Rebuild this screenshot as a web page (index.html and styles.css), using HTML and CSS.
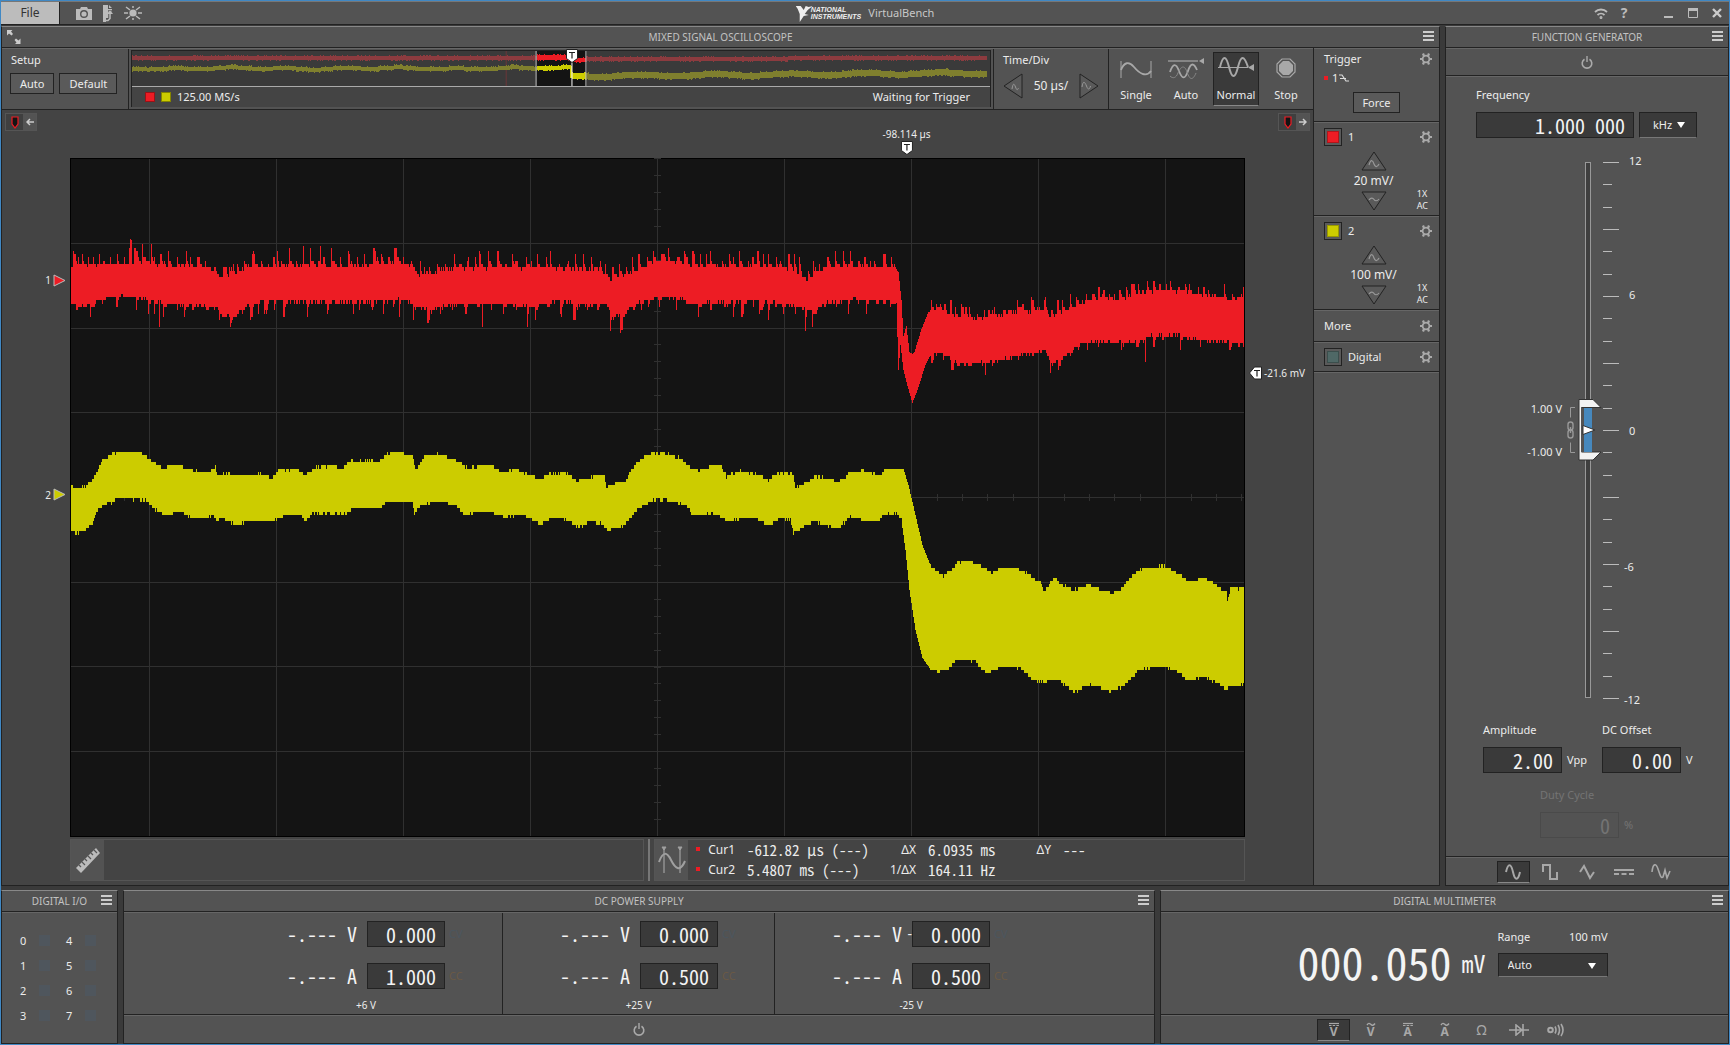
FILE: index.html
```html
<!DOCTYPE html>
<html lang="en">
<head>
<meta charset="utf-8">
<title>VirtualBench</title>
<link rel="stylesheet" href="styles.css">
</head>
<body>
<svg class="defs" aria-hidden="true">
  <symbol id="menu" viewBox="0 0 11 10"><path d="M0 0h11v2H0zM0 4h11v2H0zM0 8h11v2H0z" fill="currentColor"/></symbol>
  <symbol id="gear" viewBox="0 0 12 12"><circle cx="6" cy="6" r="3.400" fill="none" stroke="currentColor" stroke-width="1.800"/><path d="M3 .5l1 2.500M9 .5l-1 2.500M3 11.500l1-2.500M9 11.500l-1-2.500M0 6h2.600M9.400 6H12" stroke="currentColor" stroke-width="2.200"/></symbol>
  <symbol id="power" viewBox="0 0 12 13"><path d="M3.500 3.200a4.800 4.800 0 1 0 5 0" fill="none" stroke="currentColor" stroke-width="1.600"/><path d="M6 0v6" stroke="currentColor" stroke-width="1.400"/></symbol>
  <symbol id="up" viewBox="0 0 26 20"><path d="M13 1L25 19H1Z" fill="#5a5a5a" stroke="#222" /><path d="M8 14c2-7 4-4 5-1s3 4 5 0" fill="none" stroke="#999" stroke-width="1.200"/></symbol>
  <symbol id="down" viewBox="0 0 26 20"><path d="M13 19L25 1H1Z" fill="#5a5a5a" stroke="#222"/><path d="M8 9c2-3 4-2 5-.5s3 2 5-.5" fill="none" stroke="#999" stroke-width="1.200"/></symbol>
  <symbol id="flag" viewBox="0 0 8 13"><path d="M1 1h6v7L4 12 1 8Z" fill="#141414" stroke="#ed1c24" stroke-width="1.200"/></symbol>
</svg>

<div class="window">
  <header class="titlebar">
    <button class="file">File</button>
    <button class="icon" aria-label="Screenshot"><svg width="16" height="13" viewBox="0 0 16 13"><path d="M0 2h4l1-2h6l1 2h4v11H0z" fill="#bbb"/><circle cx="8" cy="7" r="3.300" fill="none" stroke="#535353" stroke-width="1.400"/></svg></button>
    <button class="icon" aria-label="Export"><svg width="10" height="17" viewBox="0 0 10 17"><path d="M0 0h5v4h4v3l-3 2v4H3v4H0zM6 0l3 3H6z" fill="#bbb"/><path d="M7 5v8c0 2-3 2-3 2" fill="none" stroke="#535353" stroke-width="3.400"/><path d="M2 15.500h3l2-2V8" fill="none" stroke="#bbb" stroke-width="1.500"/><path d="M4 9l3-4 3 4z" fill="#bbb"/></svg></button>
    <button class="icon" aria-label="Brightness"><svg width="18" height="14" viewBox="0 0 18 14"><circle cx="9" cy="7" r="3.600" fill="#bbb"/><path d="M9 0v2M9 12v2M0 7h4M14 7h4M2 1l4 3M16 1l-4 3M2 13l4-3M16 13l-4-3" stroke="#bbb" stroke-width="1.500"/></svg></button>
    <div class="brand">
      <svg width="17" height="17" viewBox="0 0 17 17"><path d="M0 1h5l3 4 2-4 3 1 4-1-5 4-3 4 4 1-5 1-4 6V9L2 4Z" fill="#eee"/></svg>
      <span class="ni">NATIONAL<br>INSTRUMENTS</span><span class="vb">VirtualBench</span>
    </div>
    <div class="sys">
      <svg width="14" height="11" viewBox="0 0 14 11" fill="none" stroke="#bbb" stroke-width="1.800"><path d="M1 4a8.500 8.500 0 0 1 12 0M3.500 7a5 5 0 0 1 7 0"/><circle cx="7" cy="9.500" r=".6"/></svg>
      <button class="help" aria-label="Help">?</button>
      <button class="icon" aria-label="Minimize"><svg width="10" height="10"><path d="M0 9h9" stroke="#bbb" stroke-width="2"/></svg></button>
      <button class="icon" aria-label="Maximize"><svg width="10" height="10"><path d="M.5.500h9v9h-9z" fill="none" stroke="#bbb" stroke-width="1"/><path d="M0 0h10v3H0z" fill="#bbb"/></svg></button>
      <button class="icon" aria-label="Close"><svg width="10" height="10"><path d="M1 1l8 8M9 1L1 9" stroke="#ccc" stroke-width="2.400"/></svg></button>
    </div>
  </header>

  <main class="upper">
    <section class="panel scope">
      <div class="head"><svg class="expand" width="14" height="14" viewBox="0 0 14 14"><path d="M0 0h5.500L4 1.500 6 4 4.500 5.500 2 3.500 0 5.500zM13.500 14H8l1.500-1.500L7.500 10 9 8.500 11.500 10.500l2-2z" fill="#ccc"/></svg><h2>MIXED SIGNAL OSCILLOSCOPE</h2><button class="menu" aria-label="Oscilloscope menu"><svg><use href="#menu"/></svg></button></div>
      <div class="scope-body">
        <div class="scope-main">
          <div class="tools">
            <div class="setup"><span>Setup</span><div><button class="btn">Auto</button><button class="btn">Default</button></div></div>
            <div class="overview">
              <svg id="overview" viewBox="0 0 861 35" preserveAspectRatio="none"></svg>
              <svg class="tag ov-tag" width="12" height="14" viewBox="0 0 12 14"><path d="M.5.500h11v9L6 13.500.500 9.500Z" fill="#fff" stroke="#222"/><path d="M3 3.500h6M6 3.500v6" stroke="#222" stroke-width="1.200"/></svg>
              <div class="ov-row"><i class="sq red"></i><i class="sq yel"></i><span>125.00 MS/s</span><span class="wait">Waiting for Trigger</span></div>
            </div>
            <div class="timediv"><span>Time/Div</span><div>
              <button class="icon" aria-label="Decrease time per division"><svg width="20" height="26"><path d="M1 13L19 1v24Z" fill="#5a5a5a" stroke="#222"/><path d="M9 16c1-6 2-6 3.500-2s2 3 3 1" fill="none" stroke="#999"/></svg></button>
              <span class="val">50 µs/</span>
              <button class="icon" aria-label="Increase time per division"><svg width="20" height="26"><path d="M19 13L1 1v24Z" fill="#5a5a5a" stroke="#222"/><path d="M3 14c1-7 3-5 4.500-1s3 4 4 0" fill="none" stroke="#999"/></svg></button></div></div>
            <div class="modes">
              <button><svg width="32" height="26" viewBox="0 0 32 26" fill="none" stroke="#a8a8a8"><path d="M1 5v17M31 5v17"/><path d="M1 14C4 6 9 5 14 11s12 11 17 4" stroke-width="1.800"/></svg>Single</button>
              <button><svg width="38" height="26" viewBox="0 0 38 26" fill="none" stroke="#a8a8a8"><path d="M1 5h30" stroke-width="1.200"/><path d="M37 2v6l-5-3z" fill="#a8a8a8" stroke="none"/><path d="M3 16c3-9 6-9 9-1s6 9 9 0 6-8 9-1" stroke-width="1.800"/><path d="M3 20c3 3 6 2 8-3s6-10 9-1 6 8 9 1" stroke="#888"/></svg>Auto</button>
              <button class="on"><svg width="36" height="26" viewBox="0 0 36 26" fill="none" stroke="#a8a8a8"><path d="M0 11.500h30"/><path d="M36 8v7l-6-3.500z" fill="#a8a8a8" stroke="none"/><path d="M2 11C5-1 8-1 11 11s6 12 9 0 6-12 10 0" stroke-width="2"/></svg>Normal</button>
              <button><svg width="22" height="26" viewBox="0 0 22 26"><path d="M7 3h8l5 5v8l-5 5H7l-5-5V8z" fill="none" stroke="#a8a8a8" stroke-width="1.200"/><path d="M8 5h6l4 4v6l-4 4H8l-4-4V9z" fill="#a8a8a8"/></svg>Stop</button>
            </div>
          </div>
          <div class="canvas">
            <div class="pill left"><b><svg width="8" height="13"><use href="#flag"/></svg></b><svg width="8" height="8" viewBox="0 0 8 8"><path d="M8 4H1M4 1L1 4l3 3" fill="none" stroke="#ccc" stroke-width="1.500"/></svg></div>
            <div class="trigpos"><span>-98.114 µs</span><svg width="12" height="14" viewBox="0 0 12 14"><path d="M.5.500h11v9L6 13.500.500 9.500Z" fill="#fff" stroke="#222"/><path d="M3 3.500h6M6 3.500v6" stroke="#222" stroke-width="1.200"/></svg></div>
            <div class="pill right"><b><svg width="8" height="13"><use href="#flag"/></svg></b><svg width="8" height="8" viewBox="0 0 8 8"><path d="M0 4h7M4 1l3 3-3 3" fill="none" stroke="#ccc" stroke-width="1.500"/></svg></div>
            <div class="gutter">
              <div class="ch ch1"><span>1</span><svg width="13" height="13"><path d="M1 1v11l11-5.500z" fill="#ed1c24" stroke="#bbb"/></svg></div>
              <div class="ch ch2"><span>2</span><svg width="13" height="13"><path d="M1 1v11l11-5.500z" fill="#cc0" stroke="#bbb"/></svg></div>
            </div>
            <svg id="plot" viewBox="70 158 1175 679" preserveAspectRatio="none"></svg>
            <div class="gutter"><div class="level"><svg width="13" height="14" viewBox="0 0 13 14"><path d="M12.500 1v12h-7L.5 7l5-6z" fill="#fff" stroke="#222"/><path d="M5 4.500h6M8 4.500v6" stroke="#222" stroke-width="1.200"/></svg><span>-21.6 mV</span></div></div>
            <div class="readouts">
              <div class="measure"><button aria-label="Measurements"><svg width="26" height="28" viewBox="0 0 26 28"><path d="M1 22L21 2l4 5L6 27z" fill="#bbb"/><path d="M4 19l2 2M7 16l3 3M10 13l2 2M13 10l3 3M16 7l2 2M19 4l3 3" stroke="#555" stroke-width="1.200"/></svg></button></div>
              <div class="split"></div>
              <div class="cursors"><button aria-label="Cursors"><svg width="28" height="28" viewBox="0 0 28 28" fill="none" stroke="#a0a0a0"><path d="M6 2v25M22 2v25" stroke-width="1.200"/><path d="M4 1h4L6 4zM20 1h4l-2 3z" fill="#a0a0a0"/><path d="M1 16C5 5 9 6 13 14s9 13 14 1" stroke-width="2"/></svg></button>
                <div class="cur">
                  <i class="dot"></i><span class="k">Cur1</span><output>-612.82 µs (---)</output><span class="k">ΔX</span><output>6.0935 ms</output><span class="k">ΔY</span><output>---</output>
                  <i class="dot"></i><span class="k">Cur2</span><output>5.4807 ms (---)</output><span class="k">1/ΔX</span><output>164.11 Hz</output>
                </div></div>
            </div>
          </div>
        </div>
        <aside class="side">
          <div class="row trig"><div class="line"><span>Trigger</span><button class="icon" aria-label="Trigger settings"><svg width="12" height="12"><use href="#gear"/></svg></button></div><div class="src"><i class="dot"></i><span>1</span><svg width="10" height="8" viewBox="0 0 10 8"><path d="M0 1h3l4 6h3M1 4.500h6" fill="none" stroke="#ddd" stroke-width="1.200"/></svg></div><button class="btn force">Force</button></div>
          <div class="row chan"><div class="line"><button class="swatch" aria-label="Channel 1"><i class="red"></i></button><span class="name">1</span><button class="icon" aria-label="Channel 1 settings"><svg width="12" height="12"><use href="#gear"/></svg></button></div>
            <div class="scale"><button class="icon" aria-label="Increase volts"><svg width="26" height="20"><use href="#up"/></svg></button><span>20 mV/</span><button class="icon" aria-label="Decrease volts"><svg width="26" height="20"><use href="#down"/></svg></button></div><div class="coup">1X<br>AC</div></div>
          <div class="row chan"><div class="line"><button class="swatch" aria-label="Channel 2"><i class="yel"></i></button><span class="name">2</span><button class="icon" aria-label="Channel 2 settings"><svg width="12" height="12"><use href="#gear"/></svg></button></div>
            <div class="scale"><button class="icon" aria-label="Increase volts"><svg width="26" height="20"><use href="#up"/></svg></button><span>100 mV/</span><button class="icon" aria-label="Decrease volts"><svg width="26" height="20"><use href="#down"/></svg></button></div><div class="coup">1X<br>AC</div></div>
          <div class="row more"><div class="line"><span>More</span><button class="icon" aria-label="More settings"><svg width="12" height="12"><use href="#gear"/></svg></button></div></div>
          <div class="row digital"><div class="line"><button class="swatch" aria-label="Digital"><i class="teal"></i></button><span class="name">Digital</span><button class="icon" aria-label="Digital settings"><svg width="12" height="12"><use href="#gear"/></svg></button></div></div>
          <div class="row rest"></div>
        </aside>
      </div>
    </section>

    <section class="panel fgen">
      <div class="head"><h2>FUNCTION GENERATOR</h2><button class="menu" aria-label="Function generator menu"><svg><use href="#menu"/></svg></button></div>
      <div class="pwr"><button class="icon" aria-label="Function generator power"><svg width="12" height="13"><use href="#power"/></svg></button></div>
      <div class="fg-body">
        <div class="freq"><label for="freq">Frequency</label><div><input id="freq" value="1.000 000"><span class="select"><select aria-label="Frequency unit"><option>kHz</option></select></span></div></div>
        <div class="slider">
          <svg id="scale" width="200" height="560" viewBox="1510 150 200 560"></svg>
          <span class="lab l12">12</span><span class="lab l6">6</span><span class="lab l0">0</span><span class="lab m6">-6</span><span class="lab m12">-12</span>
          <span class="hi">1.00 V</span><span class="lo">-1.00 V</span>
          <input type="range" min="-12" max="12" value="0" aria-label="DC offset level">
        </div>
        <div class="pair">
          <div class="field"><label for="amp">Amplitude</label><div><input id="amp" value="2.00"><span>Vpp</span></div></div>
          <div class="field"><label for="off">DC Offset</label><div><input id="off" value="0.00"><span>V</span></div></div>
        </div>
        <div class="field duty"><label for="duty">Duty Cycle</label><div><input id="duty" value="0" disabled><span>%</span></div></div>
      </div>
      <div class="strip">
        <button class="on" aria-label="Sine"><svg width="16" height="16" viewBox="0 0 16 16"><path d="M1 8C3-1 6-1 8 8s5 9 7 0"/></svg></button>
        <button aria-label="Square"><svg width="16" height="16" viewBox="0 0 16 16"><path d="M1 8V1h7v14h7V8"/></svg></button>
        <button aria-label="Triangle"><svg width="16" height="16" viewBox="0 0 16 16"><path d="M1 8l4-6 6 12 4-6"/></svg></button>
        <button aria-label="DC"><svg width="20" height="16" viewBox="0 0 20 16"><path d="M0 6h20"/><path d="M0 10h20" stroke-dasharray="5 2.500"/></svg></button>
        <button aria-label="Arbitrary"><svg width="20" height="16" viewBox="0 0 20 16"><path d="M1 8C2-1 5-1 7 5s3 10 5 8l2-7 2 8 3-7" stroke-width="1.600"/></svg></button>
      </div>
    </section>
  </main>

  <div class="lower">
    <section class="panel dio">
      <div class="head"><h2>DIGITAL I/O</h2><button class="menu" aria-label="Digital I/O menu"><svg><use href="#menu"/></svg></button></div>
      <div class="bits">
        <label>0<input type="checkbox"></label><label>4<input type="checkbox"></label>
        <label>1<input type="checkbox"></label><label>5<input type="checkbox"></label>
        <label>2<input type="checkbox"></label><label>6<input type="checkbox"></label>
        <label>3<input type="checkbox"></label><label>7<input type="checkbox"></label>
      </div>
    </section>
    <section class="panel psu">
      <div class="head"><h2>DC POWER SUPPLY</h2><button class="menu" aria-label="Power supply menu"><svg><use href="#menu"/></svg></button></div>
      <div class="rails">
        <div class="rail first"><div class="inner"><div class="set"><output>-.---</output><span class="unit">V</span><span class="neg"></span><input aria-label="+6 V voltage" value="0.000"><span class="cv">CV</span></div><div class="set"><output>-.---</output><span class="unit">A</span><span class="neg"></span><input aria-label="+6 V current" value="1.000"><span class="cc">CC</span></div><p>+6 V</p></div></div>
        <div class="rail"><div class="inner"><div class="set"><output>-.---</output><span class="unit">V</span><span class="neg"></span><input aria-label="+25 V voltage" value="0.000"><span class="cv">CV</span></div><div class="set"><output>-.---</output><span class="unit">A</span><span class="neg"></span><input aria-label="+25 V current" value="0.500"><span class="cc">CC</span></div><p>+25 V</p></div></div>
        <div class="rail"><div class="inner"><div class="set"><output>-.---</output><span class="unit">V</span><span class="neg">-</span><input aria-label="-25 V voltage" value="0.000"><span class="cv">CV</span></div><div class="set"><output>-.---</output><span class="unit">A</span><span class="neg"></span><input aria-label="-25 V current" value="0.500"><span class="cc">CC</span></div><p>-25 V</p></div></div>
      </div>
      <div class="strip"><button class="icon" aria-label="Power supply power"><svg width="12" height="13"><use href="#power"/></svg></button></div>
    </section>
    <section class="panel dmm">
      <div class="head"><h2>DIGITAL MULTIMETER</h2><button class="menu" aria-label="Multimeter menu"><svg><use href="#menu"/></svg></button></div>
      <div class="meter">
        <output>000.050</output><span class="mv">mV</span>
        <div class="range"><div><label for="range">Range</label><span>100 mV</span></div><span class="select"><select id="range"><option>Auto</option></select></span></div>
      </div>
      <div class="strip">
        <button class="on" aria-label="DC volts"><svg width="12" height="16" viewBox="0 0 12 16"><path d="M1 1.500h10" stroke-width="1.200"/><path d="M1 3.500h10" stroke-width="1" stroke-dasharray="2.500 1.200"/></svg><b>V</b></button>
        <button aria-label="AC volts"><svg width="12" height="16" viewBox="0 0 12 16"><path d="M2 3c2-3 3-1 4-.5s2 2 4-1" stroke-width="1.400"/></svg><b>V</b></button>
        <button aria-label="DC amps"><svg width="12" height="16" viewBox="0 0 12 16"><path d="M1 1.500h10" stroke-width="1.200"/><path d="M1 3.500h10" stroke-width="1" stroke-dasharray="2.500 1.200"/></svg><b>A</b></button>
        <button aria-label="AC amps"><svg width="12" height="16" viewBox="0 0 12 16"><path d="M2 3c2-3 3-1 4-.5s2 2 4-1" stroke-width="1.400"/></svg><b>A</b></button>
        <button aria-label="Resistance" class="ohm">Ω</button>
        <button aria-label="Diode"><svg width="20" height="12" viewBox="0 0 20 12"><path d="M0 6h20M7 1v10l6-5zM14 0v12" stroke-width="1.600"/></svg></button>
        <button aria-label="Continuity"><svg width="18" height="14" viewBox="0 0 18 14"><circle cx="3.500" cy="7" r="2.300"/><path d="M8 3.500q2 3.500 0 7M11 2q3 5 0 10M14 1q4 6 0 12" stroke-width="1.600"/></svg></button>
      </div>
    </section>
  </div>
</div>
<script src="waves.js"></script>
</body>
</html>
```
FILE: styles.css
```css
*{box-sizing:border-box}
body{margin:0;background:#3a3a3a;color:#ececec;font:11px/14px "Noto Sans","Open Sans",sans-serif}
button,input,select{font:inherit;color:inherit;margin:0;padding:0;border:0;border-radius:0;background:none}
svg{display:block;flex:none}
i{display:block;flex:none}
p,h2{margin:0}
.defs{position:absolute;width:0;height:0}
.window{height:100vh;min-height:900px;display:flex;flex-direction:column;border:1px solid #4088c4}
.icon{display:flex;color:#aaa}

.titlebar{position:relative;flex:none;height:24px;display:flex;align-items:center;gap:11px;background:#535353;border-top:1px solid #777;border-bottom:1px solid #222;padding-right:7px}
.file{align-self:stretch;width:59px;background:#bcbcbc;color:#333;border-right:1px solid #222;margin-right:5px;font-size:12px}
.brand{position:absolute;left:50%;transform:translateX(-50%);display:flex;align-items:center}
.ni{font:italic bold 7px/7px "Liberation Sans",Arial,sans-serif;color:#eee;margin-left:-2px;margin-right:7px}
.vb{color:#c8c8c8}
.sys{margin-left:auto;display:flex;align-items:center;gap:14px}
.help{font:bold 14px/14px "Noto Sans",sans-serif;color:#bbb;margin-left:-2px;margin-right:22px;width:8px}

.upper{flex:1;min-height:0;display:flex;gap:5px;padding-top:1px}
.lower{flex:none;height:158px;display:flex;gap:5px;padding-top:4px}
.panel{display:flex;flex-direction:column;background:#535353;border:1px solid #222;border-top:1px solid #888}
.head{flex:none;height:21px;display:flex;align-items:center;justify-content:center;position:relative;border-bottom:1px solid #222}
.head h2{font-size:10px;line-height:14px;font-weight:400;color:#c2c2c2}
.menu{position:absolute;right:5px;top:4px;color:#ccc}
.menu svg{width:11px;height:10px}
.expand{position:absolute;left:5px;top:3px}
.scope{flex:1;min-width:0}
.scope-body{flex:1;min-height:0;display:flex}
.scope-main{flex:1;min-width:0;display:flex;flex-direction:column}
.tools{flex:none;height:62px;display:flex;border-bottom:1px solid #222;border-top:1px solid #666}
.setup{width:127px;padding:4px 8px;border-right:1px solid #222}
.setup>span{padding-left:1px}
.setup div{display:flex;gap:5px;margin-top:6px}
.btn{height:21px;border:1px solid #222;background:#5a5a5a;padding:0 9px}
.overview{flex:1;min-width:0;margin:1px 2px 2px;border:1px solid #222;position:relative;background:#3a3a3a}
#overview{width:100%;height:35px}
.ov-tag{position:absolute;left:51.300%;top:-2px;margin-left:-6px}
.ov-row{height:21px;border-top:1px solid #aaa;background:#444;display:flex;align-items:center;gap:6px;padding:0 20px 0 13px}
.wait{margin-left:auto}
.sq{width:10px;height:10px;border:1px solid rgba(0,0,0,.35)}
.red{background:#ed1c24}.yel{background:#cc0}.teal{background:#4f6866}
.timediv{width:115px;padding:4px 9px;border-left:1px solid #222}
.timediv div{display:flex;align-items:center;justify-content:space-between;margin-top:6px}
.timediv .val,.scale span{font-size:12px}
.modes{width:205px;border-left:1px solid #222;display:flex;gap:4px;padding:3px 3px 3px 4px}
.modes button{width:46px;display:flex;flex-direction:column;align-items:center;justify-content:space-between;padding:3px 0;border:1px solid transparent}
.modes .on,.strip .on{background:#3a3a3a;border:1px solid #222;border-bottom-color:#888}
.canvas{flex:1;min-height:0;background:#444;display:grid;grid-template:48px 1fr 48px/68px 1fr 68px;position:relative}
#plot{width:100%;height:100%;grid-row:2;grid-column:2}
.gutter{grid-row:2;position:relative}
.gutter:nth-of-type(5){grid-column:3}
.ch,.level{position:absolute;display:flex;align-items:center;transform:translateY(-50%)}
.ch{right:4px;gap:2px;font-size:10px}
.ch1{top:18%}.ch2{top:49.600%}
.level{left:4px;top:31.600%;gap:2px;font-size:10px;white-space:nowrap}
.trigpos{position:absolute;left:69%;top:17px;transform:translateX(-50%);display:flex;flex-direction:column;align-items:center;font-size:10px;line-height:14px}
.pill{position:absolute;top:3px;height:18px;display:flex;align-items:center;background:#535353;border:1px solid #555;padding-right:2px;gap:3px}
.pill b{height:100%;width:17px;background:#3f3f3f;display:grid;place-items:center}
.pill.left{left:3px}.pill.right{right:3px}
.readouts{grid-row:3;grid-column:2;display:flex;gap:4px;padding:2px 0;height:46px;font-size:12px}
.measure{flex:572;border:1px solid #555}
.split{width:2px;background:#777}
.cursors{flex:589;border:1px solid #555;display:flex;min-width:0}
.measure button,.cursors button{width:33px;height:100%;background:#535353;display:grid;place-items:center}
.cur{display:grid;grid-template-columns:5px 34px 143px 38px 109px 26px auto;justify-content:start;align-content:center;padding-left:8px}
.cur .k{text-align:right;line-height:20px}
.cur output{padding-left:12px;line-height:20px;white-space:nowrap}
output,input,.unit{font-family:"Noto Sans Mono CJK SC","DejaVu Sans Mono",monospace}
.cur output{font-size:15px}
.dot{width:4px;height:4px;background:#ed1c24}
.cur .dot{margin-top:7px}
.side{flex:none;width:126px;border-left:1px solid #222}
.row{border-top:1px solid #666;border-bottom:1px solid #222;padding:0 10px;position:relative}
.line{display:flex;align-items:center}
.line .icon{margin-left:auto;margin-right:-3px}
.trig{height:74px;padding-top:3px;display:flex;flex-direction:column}
.src{display:flex;align-items:center;gap:4px;margin-top:5px}
.src svg{margin-left:-3px}
.force{align-self:center;margin-top:7px;padding:0 8px}
.chan{height:94px;padding-top:5px}
.swatch{width:18px;height:18px;border:1px solid #222;display:grid;place-items:center;background:#5a5a5a}
.swatch i{width:12px;height:12px;border:1px solid rgba(0,0,0,.25)}
.name{margin-left:6px}
.scale{display:flex;flex-direction:column;align-items:center;margin:5px 6px 0 0}
.scale span{line-height:20px}
.coup{position:absolute;right:11px;top:65px;font-size:9px;line-height:12px}
.more{height:32px;padding-top:8px}
.digital{height:30px;padding-top:5px}
.rest{border-bottom:0}

.fgen{flex:none;width:284px}
.pwr{flex:none;height:28px;display:grid;place-items:center;border-top:1px solid #666;border-bottom:1px solid #222}
.fg-body{flex:1;min-height:0;border-top:1px solid #666;display:flex;flex-direction:column}
.freq{padding:11px 0 0 30px}
.freq>div{display:flex;gap:5px;margin-top:10px}
input{height:26px;border:1px solid #222;background:#3a3a3a;font-size:20px;text-align:right;padding-right:8px;width:79px;color:#f4f4f4}
#freq{width:158px}
.select{position:relative;display:block}
.select select{appearance:none;width:58px;height:26px;background:#3a3a3a;border:1px solid #222;border-bottom-color:#777;padding-left:13px}
.select::after{content:"";position:absolute;right:12px;top:10px;border:4px solid transparent;border-top:6px solid #fff;border-bottom:0;pointer-events:none}
.slider{position:relative;width:200px;height:560px;margin:12px 0 0 64px}
.slider input{position:absolute;left:60px;top:12px;width:30px;height:536px;margin:0;opacity:0;writing-mode:vertical-lr}
.slider span{position:absolute;line-height:14px}
.lab.l12{left:119px;top:4px}.lab.l6{left:119px;top:138px}.lab.l0{left:119px;top:274px}.lab.m6{left:114px;top:410px}.lab.m12{left:114px;top:543px}
.slider .hi,.slider .lo{right:148px;font-size:11px}.hi{top:252px}.lo{top:295px}
.pair{display:flex;padding-left:37px;gap:5px;margin-top:13px}
.field>div{display:flex;align-items:center;gap:5px;margin-top:10px}
.field>label{display:block}
.pair .field{width:114px}
.duty{padding-left:94px;margin-top:15px;color:#747474}
.duty input{background:none;border-color:#4a4a4a;color:#747474}
.strip{flex:none;height:28px;border-top:1px solid #666;box-shadow:0 -1px #222;display:flex;justify-content:center;align-items:center;gap:4px;color:#a8a8a8}
.strip button{width:33px;height:22px;display:grid;place-items:center;border:1px solid transparent}
.strip svg{fill:none;stroke:#a8a8a8;stroke-width:2}

.dio{width:117px}
.bits{flex:1;border-top:1px solid #666;display:grid;grid-template-columns:46px 46px;grid-auto-rows:25px;align-content:start;padding:15px 0 0 18px}
.bits label{display:flex;align-items:center;gap:13px}
.bits input{appearance:none;width:11px;height:11px;padding:0;border:0;background:#4f565d}
.psu{flex:1032}
.rails{flex:1;border-top:1px solid #666;display:grid;grid-template-columns:1fr 272px 1fr}
.rail{display:flex;border-right:1px solid #222}
.rail:last-child{border-right:0}
.first{justify-content:flex-end}
.inner{width:272px;padding:8px 0 0 50px}
.set{display:flex;align-items:center;height:26px;margin-bottom:16px}
.set output,.unit{font-size:20px;color:#f4f4f4;line-height:26px}
.set output{width:57px;text-align:right}
.unit{margin-left:10px;width:10px}
.neg{width:10px;text-align:right;font-size:14px}
.set input{width:78px}
.cv{color:#4b565f;margin-left:4px}.cc{color:#6a5945;margin-left:4px}
.inner p{text-align:center;font-size:10px;margin-top:-7px;margin-left:-50px}
.psu .strip svg{stroke:none}
.dmm{flex:568}
.meter{flex:1;border-top:1px solid #666;display:flex;justify-content:center;align-items:flex-start;padding:14px 0 0 16px}
.meter output{font-size:44px;line-height:68px;color:#f4f4f4}
.mv{font:24px/68px "Noto Sans Mono CJK SC",monospace;margin:0 12px 0 10px;padding-top:2px;color:#f4f4f4}
.range{width:110px;padding-top:3px}
.range>div{display:flex;justify-content:space-between;margin-bottom:9px}
.range .select select{width:110px;height:24px;padding-left:9px}
.dmm .strip button>*{grid-area:1/1}
.dmm .strip b{font:bold 12px/12px "Noto Sans",sans-serif;padding-top:4px}
.ohm{font-size:14px}
```
FILE: waves.js
```
// Envelope keypoints [x, y] of both channels in plot coordinates.
const redTop = [[71,268],[90,268],[118,264],[150,264],[165,268],[190,266],[210,270],[220,277],[232,277],[245,269],[260,268],[300,267],[360,267],[400,264],[410,267],[415,273],[420,277],[435,273],[445,270],[480,268],[560,269],[600,270],[610,280],[625,275],[640,270],[655,262],[680,262],[690,268],[780,268],[795,272],[805,280],[815,275],[825,268],[895,268],[898,272],[901,300],[903,336],[906,326],[909,352],[912,354],[914,352],[921,329],[928,312],[940,310],[955,317],[975,320],[1000,315],[1020,312],[1045,311],[1050,317],[1063,311],[1080,306],[1092,300],[1120,300],[1145,293],[1160,291],[1185,293],[1200,296],[1225,299],[1240,301],[1245,295]];
const redBottom = [[71,301],[85,306],[90,302],[100,299],[125,295],[145,298],[165,303],[185,305],[205,305],[216,307],[222,316],[235,315],[245,307],[255,301],[265,299],[300,301],[360,301],[400,299],[412,303],[420,308],[435,308],[445,304],[500,303],[530,306],[540,303],[560,300],[575,303],[590,305],[605,303],[612,316],[625,312],[640,301],[655,297],[680,297],[690,303],[720,302],[750,299],[780,303],[795,306],[805,309],[815,308],[825,303],[850,299],[890,301],[896,303],[898,370],[900,345],[903,370],[907,386],[912,403],[917,390],[925,365],[930,355],[940,353],[950,358],[963,365],[980,362],[1000,360],[1020,355],[1045,350],[1052,362],[1065,356],[1080,343],[1090,341],[1120,341],[1140,340],[1150,335],[1180,334],[1200,339],[1245,344]];
const yelTop = [[71,487],[80,488],[85,486],[93,478],[98,468],[102,460],[110,455],[120,452],[135,452],[145,456],[152,461],[163,469],[170,466],[180,465],[190,470],[205,473],[215,467],[217,476],[225,473],[237,476],[250,473],[268,475],[270,479],[278,470],[298,469],[305,475],[315,467],[335,466],[340,469],[350,460],[380,461],[388,453],[398,452],[412,456],[415,468],[418,466],[425,455],[440,454],[455,460],[468,469],[478,466],[493,466],[500,473],[515,469],[525,473],[540,480],[545,474],[567,473],[577,481],[595,476],[604,475],[606,487],[613,484],[625,480],[632,468],[640,460],[648,454],[662,453],[678,457],[690,467],[698,470],[710,466],[720,466],[726,476],[740,471],[755,474],[768,480],[777,473],[793,474],[795,488],[805,483],[815,476],[830,479],[838,482],[848,474],[862,470],[880,475],[885,469],[903,469],[908,485],[915,515],[922,545],[930,565],[943,576],[950,570],[957,562],[968,561],[983,567],[992,574],[1000,567],[1015,567],[1030,575],[1040,583],[1044,592],[1050,582],[1054,577],[1060,584],[1073,590],[1088,585],[1095,588],[1110,593],[1120,590],[1130,578],[1140,569],[1163,566],[1175,572],[1190,582],[1203,577],[1215,585],[1226,592],[1227,600],[1230,589],[1245,588]];
const yelBottom = [[71,530],[75,533],[82,532],[92,524],[96,513],[103,504],[110,503],[120,498],[145,500],[152,507],[163,515],[180,511],[193,519],[205,518],[213,514],[216,521],[222,518],[235,525],[250,521],[273,521],[285,515],[300,515],[305,521],[312,513],[345,514],[352,508],[380,507],[388,501],[412,501],[414,514],[420,505],[437,501],[455,505],[465,515],[480,511],[495,513],[505,518],[520,514],[540,525],[550,519],[565,519],[575,526],[583,526],[590,521],[600,524],[608,530],[625,525],[632,515],[640,507],[650,501],[665,499],[685,505],[693,515],[712,513],[730,522],[742,518],[757,519],[768,525],[780,519],[790,520],[793,533],[800,529],[812,522],[837,528],[850,517],[865,521],[878,521],[885,514],[897,513],[901,520],[905,550],[909,590],[915,630],[922,658],[930,669],[938,672],[948,669],[955,661],[965,660],[975,662],[987,674],[1000,667],[1020,668],[1032,680],[1045,682],[1055,678],[1065,686],[1075,692],[1090,685],[1110,692],[1123,686],[1138,670],[1160,666],[1175,670],[1188,681],[1205,676],[1225,689],[1235,686],[1245,684]];

let seed = 7;
const rnd = () => (seed = (seed * 16807) % 2147483647) / 2147483647;
function at(points, x) {
  for (let i = 1; i < points.length; i++) {
    const [x0, y0] = points[i - 1], [x1, y1] = points[i];
    if (x <= x1) return y0 + (y1 - y0) * (x - x0) / (x1 - x0);
  }
  return points[points.length - 1][1];
}
// One column per pixel; samples step in units of about three pixels.
function band(top, bottom, noise, fixed) {
  const snap = y => Math.round(y / 3.3) * 3.3;
  let d = '';
  let up = 0, down = 0, nextUp = 3, nextDown = 6;
  for (let x = 71; x < 1244; x++) {
    let y0 = at(top, x), y1 = at(bottom, x);
    if (noise && !(x > 895 && x < 930)) {
      const late = x > 900 ? .75 : 1;
      if (--nextUp <= 0) { up = (5 + Math.pow(rnd(), 1.3) * 13) * late; nextUp = 3 + rnd() * 6; }
      if (--nextDown <= 0) { down = (3 + Math.pow(rnd(), 2.2) * 16) * late; nextDown = 5 + rnd() * 9; }
      y0 = snap(y0 - up - rnd() * 3 + 1); y1 = snap(y1 + down + rnd() * 3 - 1);
      up *= rnd() < .6 ? .35 : .95; down *= rnd() < .6 ? .3 : .95;
      y0 = fixed.top[x] || y0;
      y1 = fixed.bottom[x] || y1;
    } else if (!noise && !(x > 902 && x < 930)) {
      y0 = snap(y0 + (rnd() - .5) * 2); y1 = snap(y1 + (rnd() - .5) * 2);
    }
    d += `M${x} ${Math.round(y0)}h1V${Math.round(y1)}h-1z`;
  }
  return d;
}
let g = '<rect x="70" y="158" width="1175" height="679" fill="#000"/><rect x="71" y="159" width="1173" height="677" fill="#141414"/>';
let grid = '';
for (let i = 0; i < 9; i++) grid += `M${149 + 127 * i}.500 159v677`;
[243, 328, 412, 497, 582, 666, 751].forEach(y => grid += `M71 ${y}.500h1173`);
for (let i = -20; i <= 19; i++) grid += `M654 ${497 + Math.round(i * 16.950)}.500h7`;
for (let x = 73; x < 1244; x += 25.400) grid += `M${Math.round(x)}.500 494v7`;
g += `<path d="${grid}" stroke="#303030" fill="none"/>`;
g += `<path fill="#cc0" shape-rendering="crispEdges" d="${band(yelTop, yelBottom, false)}"/>`;
g += `<path fill="#ed1c24" shape-rendering="crispEdges" d="${band(redTop, redBottom, true, { top: { 130: 239, 131: 240, 303: 246, 320: 246 }, bottom: { 159: 327, 482: 327, 610: 331, 805: 331, 985: 375, 1050: 373, 1145: 362 } })}"/>`;
document.getElementById('plot').innerHTML = g;

// Whole-record overview strip.
function strip(x0, x1, mid, h) {
  let d = '';
  for (let x = x0; x < x1; x++) {
    const m = mid(x), t = Math.round(m - h / 2 - (rnd() < .2 ? 1 : 0)), b = Math.round(m + h / 2 + (rnd() < .2 ? 1 : 0));
    d += `M${x} ${t}h1V${b}h-1z`;
  }
  return d;
}
const wob = x => Math.sin(x / 9) * .7 + Math.sin(x / 23) * .5;
const rightYel = x => 25 - (x - 456) / 403 * 3 + Math.sin(x / 12);
document.getElementById('overview').innerHTML =
  `<rect x="406" width="50" height="35" fill="#141414"/><path d="M375.500 0v35" stroke="#6a3638"/>
  <g shape-rendering="crispEdges"><path fill="#8c3b3f" d="${strip(0, 406, () => 6.500, 4)}${strip(456, 858, x => 8 - (x - 456) / 403, 4)}"/>
  <path fill="#7f7f2e" d="${strip(0, 406, x => 17.500 + wob(x), 4)}${strip(456, 858, rightYel, 6)}"/>
  <path fill="#ed1c24" d="${strip(406, 442, () => 6.500, 5)}${strip(442, 456, () => 9, 4)}"/>
  <path fill="#cc0" d="${strip(406, 441, x => 17 + wob(x), 4)}M440 15h2v12h-2z${strip(442, 456, () => 25, 6)}"/></g>
  <path d="M405.500 0v35M455.500 0v35" stroke="#bbb"/><path d="M441.500 8v27" stroke="#fff"/>`;

// Amplitude scale from -12 V to 12 V.
let s = '<rect x="1585.500" y="162.500" width="5" height="535" fill="#3f3f3f" stroke="#999"/>', t = '';
for (let i = 0; i <= 24; i++) t += `M1603 ${162 + Math.round(i * 22.333)}.500h${i % 3 ? 9 : 16}`;
s += `<path d="${t}" stroke="#bbb"/><rect x="1584" y="407" width="8" height="45" fill="#4688bd"/>
  <path d="M1579 399.500h14l8 8h-19.500v44.500h19.500l-8 8h-14z" fill="#f2f2f2" stroke="#333"/>
  <rect x="1581" y="408" width="3" height="44" fill="#535353"/>
  <rect x="1584" y="408" width="8" height="44" fill="#4688bd"/>
  <path d="M1583 425.500v9l12-4.500z" fill="#fff" stroke="#333"/>
  <path d="M1575 407.500h-4.500v10M1575 452.500h-4.500v-10" fill="none" stroke="#999"/>
  <g fill="none" stroke="#999" stroke-width="1.400"><rect x="1568" y="422" width="5" height="8" rx="2.500"/><rect x="1568" y="430" width="5" height="8" rx="2.500"/><path d="M1570.500 427v6"/></g>`;
document.getElementById('scale').innerHTML = s;
```
